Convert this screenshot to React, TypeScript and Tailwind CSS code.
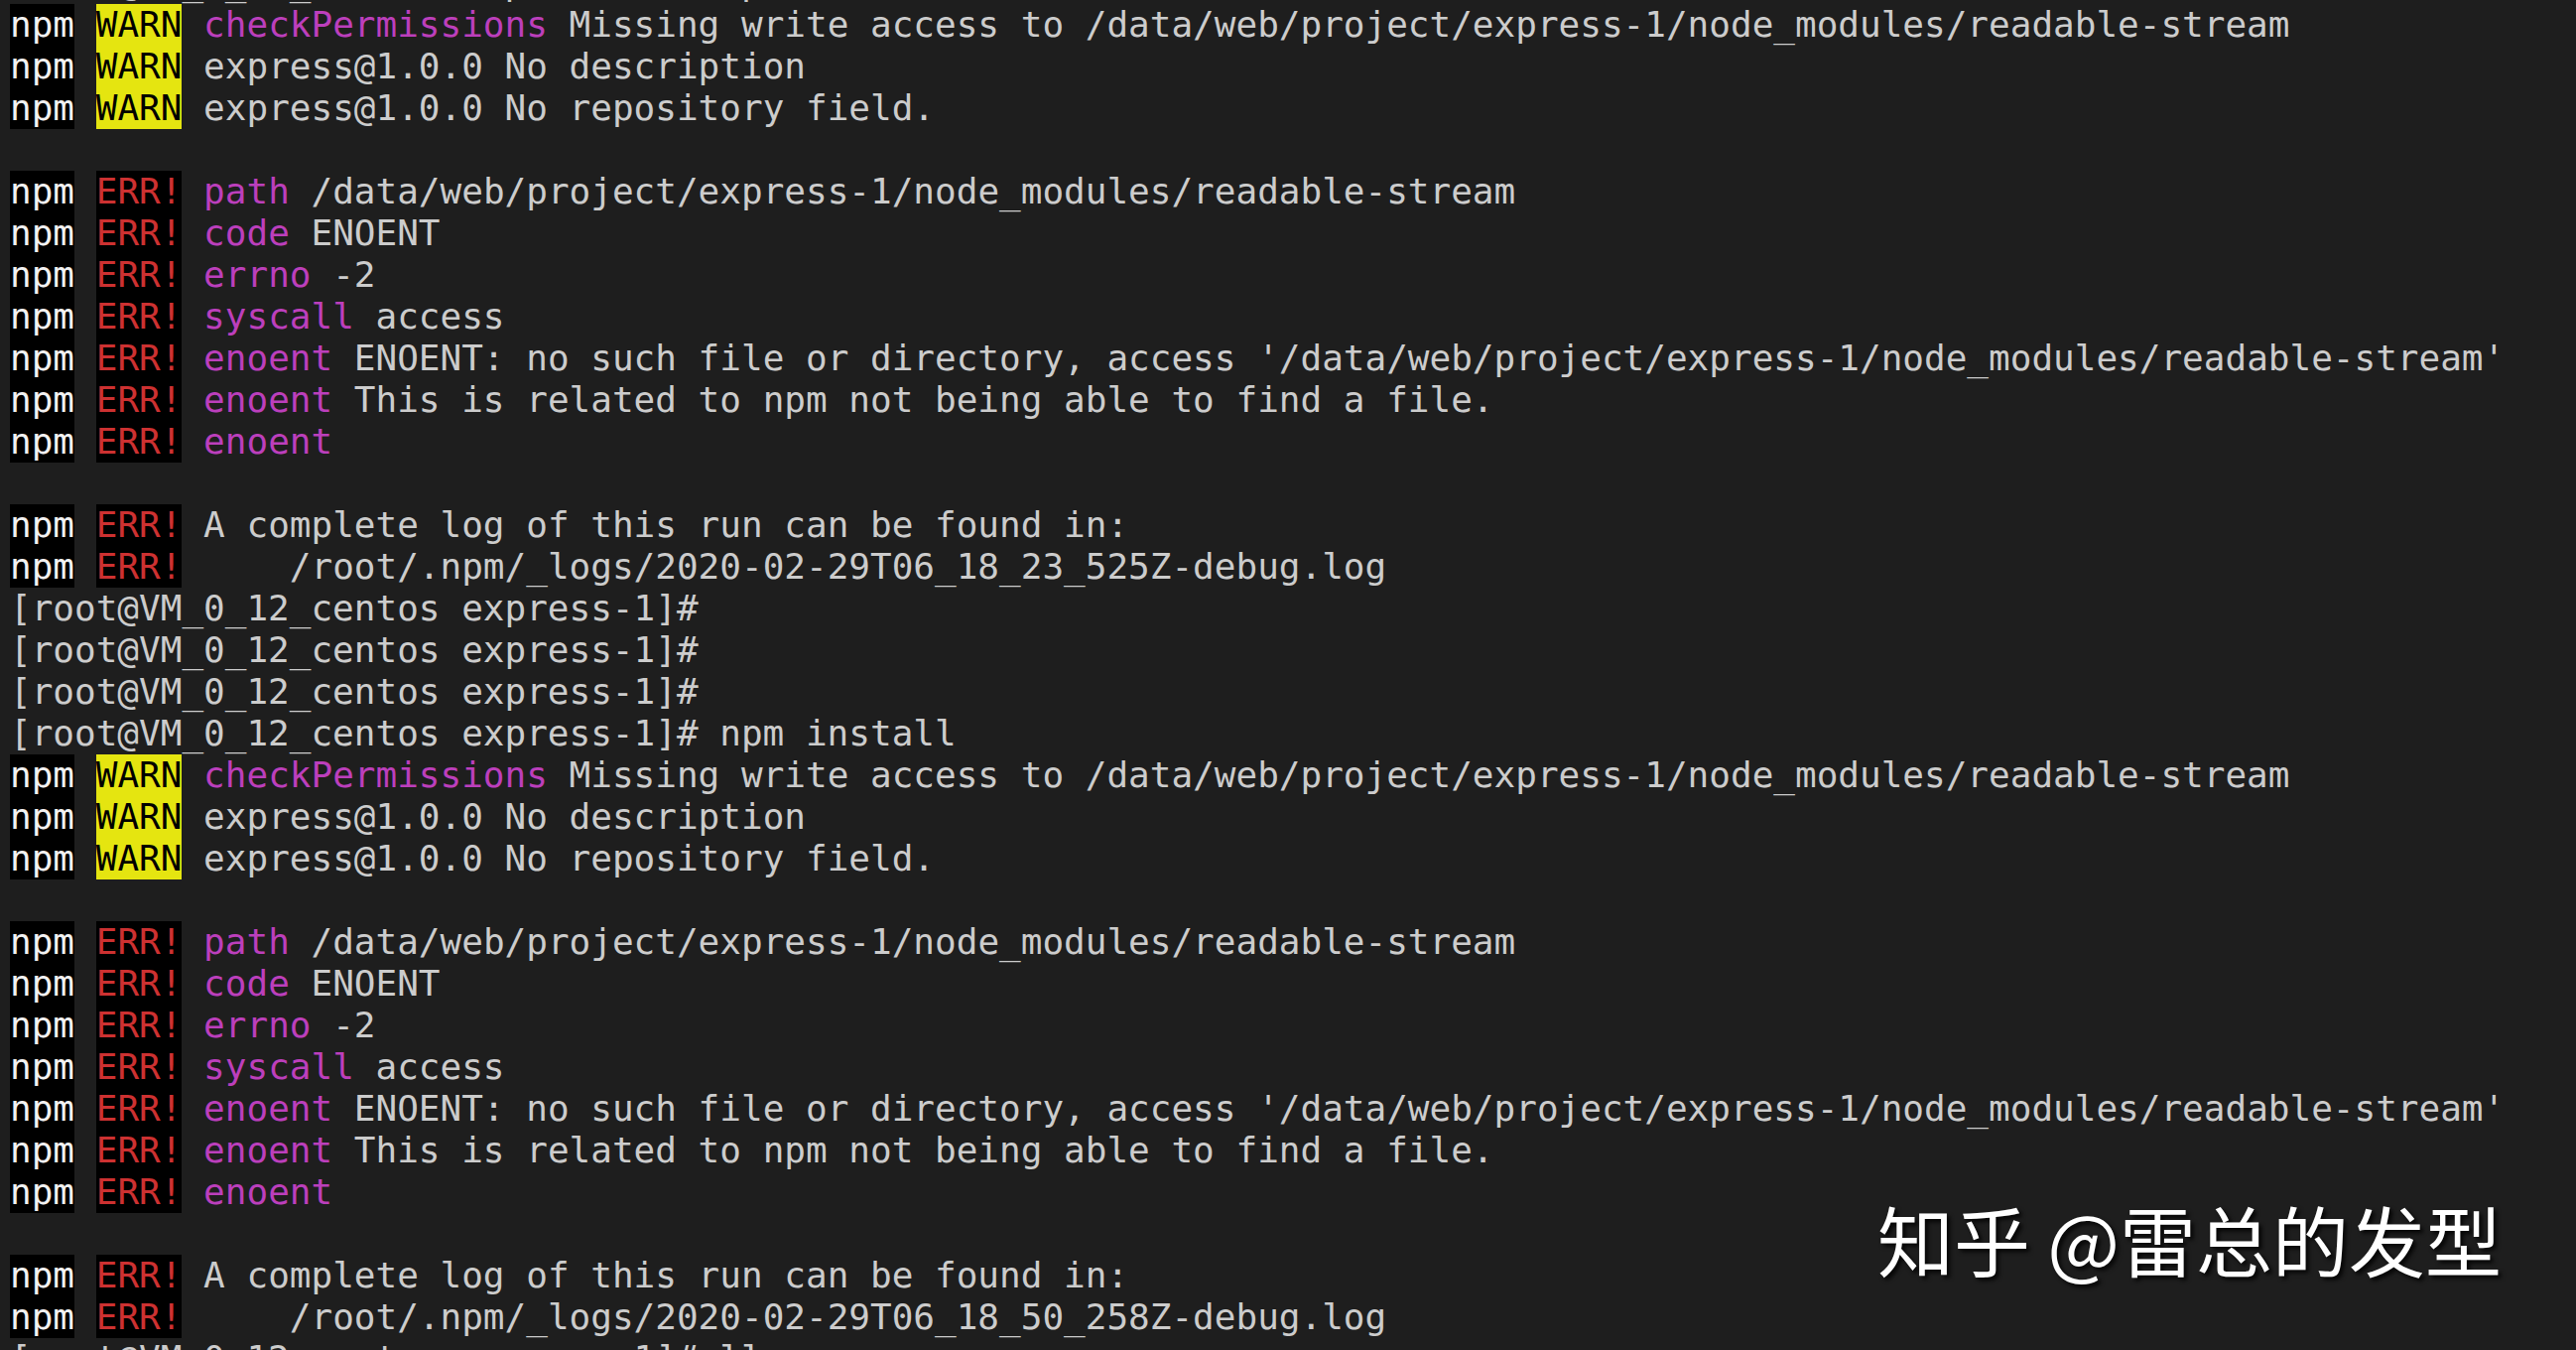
import React from "react";

type Seg = { t: string; c: string };
type Line = Seg[];

const NPM: Seg = { t: "npm", c: "bg-black text-[#f2f2f2]" };
const SP: Seg = { t: " ", c: "" };
const WARN: Seg = { t: "WARN", c: "bg-[#e5e510] text-black" };
const ERR: Seg = { t: "ERR!", c: "bg-black text-[#cd3131]" };
const mag = (t: string): Seg => ({ t, c: "text-[#bc3fbc]" });
const txt = (t: string): Seg => ({ t, c: "" });

const w = (k: string | null, rest: string): Line =>
  k ? [NPM, SP, WARN, SP, mag(k), txt(rest)] : [NPM, SP, WARN, SP, txt(rest)];
const e = (k: string | null, rest: string): Line =>
  k ? [NPM, SP, ERR, SP, mag(k), txt(rest)] : [NPM, SP, ERR, SP, txt(rest)];
const p = (cmd: string): Line => [txt("[root@VM_0_12_centos express-1]#" + cmd)];
const blank: Line = [];

const block = (log: string): Line[] => [
  w("checkPermissions", " Missing write access to /data/web/project/express-1/node_modules/readable-stream"),
  w(null, "express@1.0.0 No description"),
  w(null, "express@1.0.0 No repository field."),
  blank,
  e("path", " /data/web/project/express-1/node_modules/readable-stream"),
  e("code", " ENOENT"),
  e("errno", " -2"),
  e("syscall", " access"),
  e("enoent", " ENOENT: no such file or directory, access '/data/web/project/express-1/node_modules/readable-stream'"),
  e("enoent", " This is related to npm not being able to find a file."),
  e("enoent", ""),
  blank,
  e(null, "A complete log of this run can be found in:"),
  e(null, "    /root/.npm/_logs/" + log),
];

const lines: Line[] = [
  p(" npm install"),
  ...block("2020-02-29T06_18_23_525Z-debug.log"),
  p(""),
  p(""),
  p(""),
  p(" npm install"),
  ...block("2020-02-29T06_18_50_258Z-debug.log"),
  p(" ll"),
];

export default function App() {
  return (
    <div className="relative w-[2596px] h-[1360px] overflow-hidden bg-[#1e1e1e]">
      <div
        className="-mt-[38px] pl-[10px] text-[36px] leading-[42px] text-[#cccccc] whitespace-pre"
        style={{ fontFamily: '"DejaVu Sans Mono", "Liberation Mono", monospace' }}
      >
        {lines.map((ln, i) => (
          <div key={i} className="h-[42px] flex">
            {ln.map((s, j) => (
              <span key={j} className={"inline-block h-[42px] " + s.c}>
                {s.t}
              </span>
            ))}
          </div>
        ))}
      </div>
      <div
        className="absolute left-[1892px] top-[1209px] text-[77px] leading-none text-white font-normal whitespace-pre [text-shadow:3px_3px_4px_rgba(0,0,0,0.85)]"
        style={{ fontFamily: '"Noto Sans CJK SC", "Noto Sans", sans-serif' }}
      >
        知乎 @雷总的发型
      </div>
    </div>
  );
}
